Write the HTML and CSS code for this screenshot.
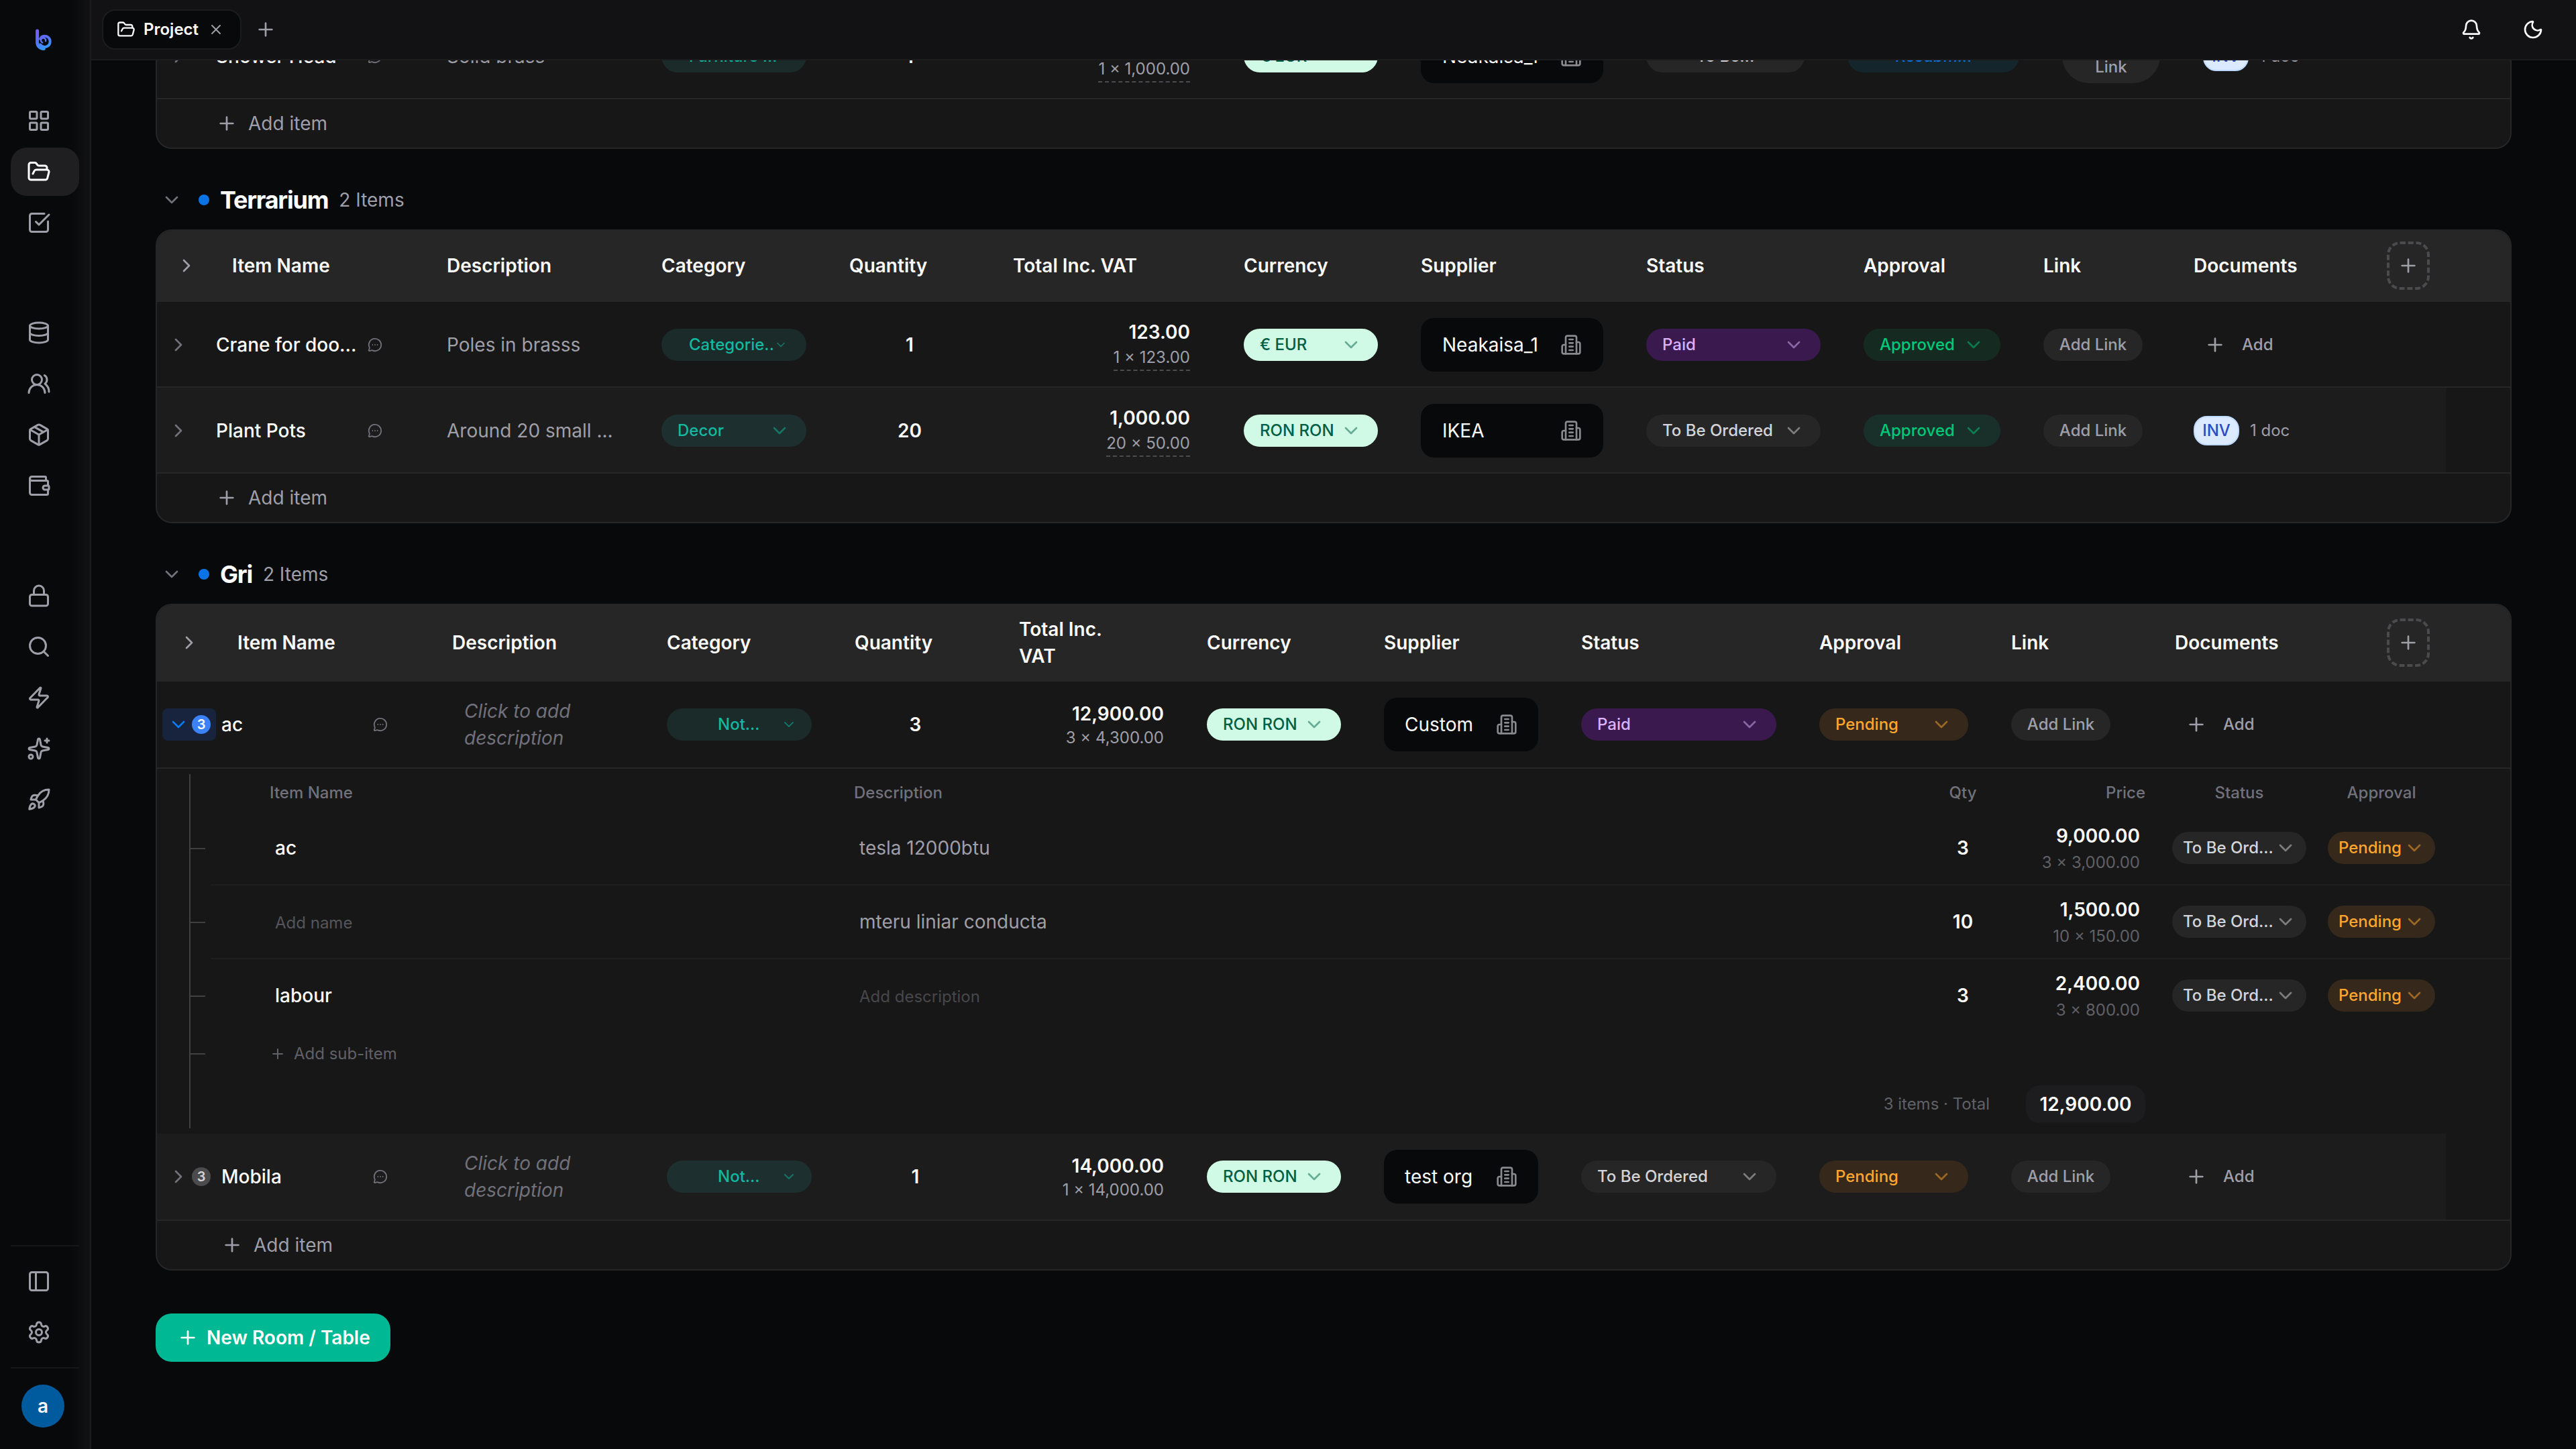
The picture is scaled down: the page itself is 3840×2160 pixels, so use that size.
FILE: index.html
```html
<!DOCTYPE html>
<html lang="en">
<head>
  <meta charset="UTF-8" />
  <meta name="viewport" content="width=device-width, initial-scale=1.0"/>
  <title>Project</title>
  <link rel="stylesheet" href="styles.css">
</head>
<body>

  <!-- icon sprite -->
  <svg class="sprite" aria-hidden="true">
    <symbol id="grid" viewBox="0 0 24 24"><rect x="3" y="3" width="7" height="7" rx="1"/><rect x="14" y="3" width="7" height="7" rx="1"/><rect x="14" y="14" width="7" height="7" rx="1"/><rect x="3" y="14" width="7" height="7" rx="1"/></symbol>
    <symbol id="folder" viewBox="0 0 24 24"><path d="m6 14 1.5-2.9A2 2 0 0 1 9.24 10H20a2 2 0 0 1 1.94 2.5l-1.54 6a2 2 0 0 1-1.95 1.5H4a2 2 0 0 1-2-2V5a2 2 0 0 1 2-2h3.9a2 2 0 0 1 1.69.9l.81 1.2a2 2 0 0 0 1.67.9H18a2 2 0 0 1 2 2v2"/></symbol>
    <symbol id="check" viewBox="0 0 24 24"><path d="M21 10.656V19a2 2 0 0 1-2 2H5a2 2 0 0 1-2-2V5a2 2 0 0 1 2-2h12.344"/><path d="m9 11 3 3L22 4"/></symbol>
    <symbol id="database" viewBox="0 0 24 24"><ellipse cx="12" cy="5" rx="9" ry="3"/><path d="M3 5v14a9 3 0 0 0 18 0V5"/><path d="M3 12a9 3 0 0 0 18 0"/></symbol>
    <symbol id="users" viewBox="0 0 24 24"><path d="M18 21a8 8 0 0 0-16 0"/><circle cx="10" cy="8" r="5"/><path d="M22 20c0-3.37-2-6.5-4-8a5 5 0 0 0-.45-8.3"/></symbol>
    <symbol id="package" viewBox="0 0 24 24"><path d="M11 21.73a2 2 0 0 0 2 0l7-4A2 2 0 0 0 21 16V8a2 2 0 0 0-1-1.73l-7-4a2 2 0 0 0-2 0l-7 4A2 2 0 0 0 3 8v8a2 2 0 0 0 1 1.73z"/><path d="M12 22V12"/><path d="M3.29 7 12 12l8.71-5"/><path d="m7.5 4.27 9 5.15"/></symbol>
    <symbol id="wallet" viewBox="0 0 24 24"><path d="M19 7V4a1 1 0 0 0-1-1H5a2 2 0 0 0 0 4h15a1 1 0 0 1 1 1v4h-3a2 2 0 0 0 0 4h3a1 1 0 0 0 1-1v-2a1 1 0 0 0-1-1"/><path d="M3 5v14a2 2 0 0 0 2 2h15a1 1 0 0 0 1-1v-4"/></symbol>
    <symbol id="lock" viewBox="0 0 24 24"><rect x="3" y="11" width="18" height="11" rx="2"/><path d="M7 11V7a5 5 0 0 1 10 0v4"/></symbol>
    <symbol id="search" viewBox="0 0 24 24"><circle cx="11" cy="11" r="8"/><path d="m21 21-4.34-4.34"/></symbol>
    <symbol id="zap" viewBox="0 0 24 24"><path d="M4 14a1 1 0 0 1-.78-1.63l9.9-10.2a.5.5 0 0 1 .86.46l-1.92 6.02A1 1 0 0 0 13 10h7a1 1 0 0 1 .78 1.63l-9.9 10.2a.5.5 0 0 1-.86-.46l1.92-6.02A1 1 0 0 0 11 14z"/></symbol>
    <symbol id="sparkles" viewBox="0 0 24 24"><path d="M11.017 2.814a1 1 0 0 1 1.966 0l1.051 5.558a2 2 0 0 0 1.594 1.594l5.558 1.051a1 1 0 0 1 0 1.966l-5.558 1.051a2 2 0 0 0-1.594 1.594l-1.051 5.558a1 1 0 0 1-1.966 0l-1.051-5.558a2 2 0 0 0-1.594-1.594l-5.558-1.051a1 1 0 0 1 0-1.966l5.558-1.051a2 2 0 0 0 1.594-1.594z"/><path d="M20 2v4"/><path d="M22 4h-4"/><circle cx="4" cy="20" r="2"/></symbol>
    <symbol id="rocket" viewBox="0 0 24 24"><path d="M4.5 16.5c-1.5 1.26-2 5-2 5s3.74-.5 5-2c.71-.84.7-2.13-.09-2.91a2.18 2.18 0 0 0-2.91-.09z"/><path d="m12 15-3-3a22 22 0 0 1 2-3.95A12.88 12.88 0 0 1 22 2c0 2.72-.78 7.5-6 11a22.35 22.35 0 0 1-4 2z"/><path d="M9 12H4s.55-3.03 2-4c1.62-1.08 5 0 5 0"/><path d="M12 15v5s3.03-.55 4-2c1.08-1.62 0-5 0-5"/></symbol>
    <symbol id="panel" viewBox="0 0 24 24"><rect x="3" y="3" width="18" height="18" rx="2"/><path d="M9 3v18"/></symbol>
    <symbol id="settings" viewBox="0 0 24 24"><path d="M9.671 4.136a2.34 2.34 0 0 1 4.659 0 2.34 2.34 0 0 0 3.319 1.915 2.34 2.34 0 0 1 2.33 4.033 2.34 2.34 0 0 0 0 3.831 2.34 2.34 0 0 1-2.33 4.033 2.34 2.34 0 0 0-3.319 1.915 2.34 2.34 0 0 1-4.659 0 2.34 2.34 0 0 0-3.32-1.915 2.34 2.34 0 0 1-2.33-4.033 2.34 2.34 0 0 0 0-3.831A2.34 2.34 0 0 1 6.35 6.051a2.34 2.34 0 0 0 3.319-1.915"/><circle cx="12" cy="12" r="3"/></symbol>
    <symbol id="bell" viewBox="0 0 24 24"><path d="M10.268 21a2 2 0 0 0 3.464 0"/><path d="M3.262 15.326A1 1 0 0 0 4 17h16a1 1 0 0 0 .74-1.673C19.41 13.956 18 12.499 18 8A6 6 0 0 0 6 8c0 4.499-1.411 5.956-2.738 7.326"/></symbol>
    <symbol id="moon" viewBox="0 0 24 24"><path d="M20.985 12.486a9 9 0 1 1-9.473-9.472c.405-.022.617.46.402.803a6 6 0 0 0 8.268 8.268c.344-.215.825-.004.803.401"/></symbol>
    <symbol id="plus" viewBox="0 0 24 24"><path d="M5 12h14"/><path d="M12 5v14"/></symbol>
    <symbol id="x" viewBox="0 0 24 24"><path d="M18 6 6 18"/><path d="m6 6 12 12"/></symbol>
    <symbol id="down" viewBox="0 0 24 24"><path d="m6 9 6 6 6-6"/></symbol>
    <symbol id="right" viewBox="0 0 24 24"><path d="m9 18 6-6-6-6"/></symbol>
    <symbol id="comment" viewBox="0 0 24 24"><path d="M2.992 16.342a2 2 0 0 1 .094 1.167l-1.065 3.29a1 1 0 0 0 1.236 1.168l3.413-.998a2 2 0 0 1 1.099.092 10 10 0 1 0-4.777-4.719"/><path d="M8 12h.01"/><path d="M12 12h.01"/><path d="M16 12h.01"/></symbol>
    <symbol id="building" viewBox="0 0 24 24"><path d="M6 22V4a2 2 0 0 1 2-2h8a2 2 0 0 1 2 2v18Z"/><path d="M6 12H4a2 2 0 0 0-2 2v6a2 2 0 0 0 2 2h2"/><path d="M18 9h2a2 2 0 0 1 2 2v9a2 2 0 0 1-2 2h-2"/><path d="M10 6h4"/><path d="M10 10h4"/><path d="M10 14h4"/><path d="M10 18h4"/></symbol>
  </svg>

  <aside class="sidebar">
    <svg class="logo" viewBox="0 0 26 34">
      <defs>
        <linearGradient id="logoFill" gradientUnits="userSpaceOnUse" x1="4" y1="2" x2="18" y2="32">
          <stop offset="0" stop-color="#7c5cf5"/>
          <stop offset="0.45" stop-color="#5b6cf8"/>
          <stop offset="1" stop-color="#2ea0f8"/>
        </linearGradient>
      </defs>
      <g fill="none" stroke="url(#logoFill)" stroke-linecap="round" stroke-linejoin="round">
        <path d="M3.600 4V21a9.400 9.400 0 0 0 9.600 9.600" stroke-width="5"/>
        <path d="M8 24.500a8 8 0 0 0 14.600 -4.500a7.800 7.800 0 0 0 -8.600 -8.300a7 7 0 0 0 -6 4.300" stroke-width="4"/>
        <path d="M11.200 21.500a3.600 3.600 0 1 1 4.800 -2.300" stroke-width="2.400"/>
      </g>
    </svg>

    <nav class="nav">
      <div class="nav-group">
        <a class="nav-item"><svg class="icon"><use href="#grid"/></svg></a>
        <a class="nav-item active"><svg class="icon"><use href="#folder"/></svg></a>
        <a class="nav-item"><svg class="icon"><use href="#check"/></svg></a>
      </div>
      <div class="nav-group">
        <a class="nav-item"><svg class="icon"><use href="#database"/></svg></a>
        <a class="nav-item"><svg class="icon"><use href="#users"/></svg></a>
        <a class="nav-item"><svg class="icon"><use href="#package"/></svg></a>
        <a class="nav-item"><svg class="icon"><use href="#wallet"/></svg></a>
      </div>
      <div class="nav-group">
        <a class="nav-item"><svg class="icon"><use href="#lock"/></svg></a>
        <a class="nav-item"><svg class="icon"><use href="#search"/></svg></a>
        <a class="nav-item"><svg class="icon"><use href="#zap"/></svg></a>
        <a class="nav-item"><svg class="icon"><use href="#sparkles"/></svg></a>
        <a class="nav-item"><svg class="icon"><use href="#rocket"/></svg></a>
      </div>
    </nav>

    <div class="side-bottom">
      <a class="nav-item"><svg class="icon"><use href="#panel"/></svg></a>
      <a class="nav-item"><svg class="icon"><use href="#settings"/></svg></a>
    </div>
    <div class="side-user"><div class="avatar">a</div></div>
  </aside>

  <div class="page">
    <header class="topbar">
      <div class="tab">
        <svg class="icon tab-folder"><use href="#folder"/></svg>
        <span>Project</span>
        <svg class="icon tab-close"><use href="#x"/></svg>
      </div>
      <svg class="icon tab-add"><use href="#plus"/></svg>
      <div class="top-actions">
        <svg class="icon"><use href="#bell"/></svg>
        <svg class="icon"><use href="#moon"/></svg>
      </div>
    </header>

    <main class="content">

      <!-- room scrolled under the top bar -->
      <section class="card cut t1">
        <div class="row">
          <div class="name-cell">
            <svg class="icon chev"><use href="#right"/></svg>
            <span class="name">Shower Head</span>
            <svg class="icon comment"><use href="#comment"/></svg>
          </div>
          <div class="desc">Solid brass</div>
          <div><span class="pill teal tight">Furniture ...<svg class="icon"><use href="#down"/></svg></span></div>
          <div class="qty">1</div>
          <div class="total"><b>1,000.00</b><small class="dash">1 × 1,000.00</small></div>
          <div><span class="pill mint">€ EUR<svg class="icon"><use href="#down"/></svg></span></div>
          <div><span class="supplier">Neakaisa_1<svg class="icon"><use href="#building"/></svg></span></div>
          <div><span class="pill gray mid">To Be...</span></div>
          <div><span class="pill blue mid">Resubm...</span></div>
          <div><span class="pill link two">Add<br>Link</span></div>
          <div class="docs"><span class="inv">INV</span>1 doc</div>
        </div>
        <div class="add-item"><svg class="icon"><use href="#plus"/></svg>Add item</div>
      </section>

      <div class="room-head">
        <svg class="icon"><use href="#down"/></svg>
        <i class="dot"></i>
        <h2>Terrarium</h2>
        <span>2 Items</span>
      </div>
      <section class="card t2">
        <div class="row head">
          <div class="name-cell"><svg class="icon chev"><use href="#right"/></svg>Item Name</div>
          <div>Description</div>
          <div>Category</div>
          <div>Quantity</div>
          <div>Total Inc. VAT</div>
          <div>Currency</div>
          <div>Supplier</div>
          <div>Status</div>
          <div>Approval</div>
          <div>Link</div>
          <div>Documents</div>
          <div><span class="add-col"><svg class="icon"><use href="#plus"/></svg></span></div>
        </div>
        <div class="row">
          <div class="name-cell">
            <svg class="icon chev"><use href="#right"/></svg>
            <span class="name">Crane for doo...</span>
            <svg class="icon comment"><use href="#comment"/></svg>
          </div>
          <div class="desc">Poles in brasss</div>
          <div><span class="pill teal tight">Categorie..<svg class="icon"><use href="#down"/></svg></span></div>
          <div class="qty">1</div>
          <div class="total"><b>123.00</b><small class="dash">1 × 123.00</small></div>
          <div><span class="pill mint">€ EUR<svg class="icon"><use href="#down"/></svg></span></div>
          <div><span class="supplier">Neakaisa_1<svg class="icon"><use href="#building"/></svg></span></div>
          <div><span class="pill purple">Paid<svg class="icon"><use href="#down"/></svg></span></div>
          <div><span class="pill green">Approved<svg class="icon"><use href="#down"/></svg></span></div>
          <div><span class="pill link">Add Link</span></div>
          <div class="add-doc"><svg class="icon"><use href="#plus"/></svg>Add</div>
          <div></div>
        </div>
        <div class="row alt">
          <div class="name-cell">
            <svg class="icon chev"><use href="#right"/></svg>
            <span class="name">Plant Pots</span>
            <svg class="icon comment"><use href="#comment"/></svg>
          </div>
          <div class="desc">Around 20 small ...</div>
          <div><span class="pill teal">Decor<svg class="icon"><use href="#down"/></svg></span></div>
          <div class="qty">20</div>
          <div class="total"><b>1,000.00</b><small class="dash">20 × 50.00</small></div>
          <div><span class="pill mint">RON RON<svg class="icon"><use href="#down"/></svg></span></div>
          <div><span class="supplier">IKEA<svg class="icon"><use href="#building"/></svg></span></div>
          <div><span class="pill gray">To Be Ordered<svg class="icon"><use href="#down"/></svg></span></div>
          <div><span class="pill green">Approved<svg class="icon"><use href="#down"/></svg></span></div>
          <div><span class="pill link">Add Link</span></div>
          <div class="docs"><span class="inv">INV</span>1 doc</div>
          <div></div>
        </div>
        <div class="add-item"><svg class="icon"><use href="#plus"/></svg>Add item</div>
      </section>

      <div class="room-head">
        <svg class="icon"><use href="#down"/></svg>
        <i class="dot"></i>
        <h2>Gri</h2>
        <span>2 Items</span>
      </div>
      <section class="card t3">
        <div class="row head">
          <div class="name-cell"><svg class="icon chev"><use href="#right"/></svg>Item Name</div>
          <div>Description</div>
          <div>Category</div>
          <div>Quantity</div>
          <div>Total Inc.<br>VAT</div>
          <div>Currency</div>
          <div>Supplier</div>
          <div>Status</div>
          <div>Approval</div>
          <div>Link</div>
          <div>Documents</div>
          <div><span class="add-col"><svg class="icon"><use href="#plus"/></svg></span></div>
        </div>
        <div class="row">
          <div class="name-cell">
            <span class="toggle open"><svg class="icon"><use href="#down"/></svg><i>3</i></span>
            <span class="name">ac</span>
            <svg class="icon comment"><use href="#comment"/></svg>
          </div>
          <div class="desc empty">Click to add<br>description</div>
          <div><span class="pill teal not">Not...<svg class="icon"><use href="#down"/></svg></span></div>
          <div class="qty">3</div>
          <div class="total"><b>12,900.00</b><small>3 × 4,300.00</small></div>
          <div><span class="pill mint">RON RON<svg class="icon"><use href="#down"/></svg></span></div>
          <div><span class="supplier">Custom<svg class="icon"><use href="#building"/></svg></span></div>
          <div><span class="pill purple">Paid<svg class="icon"><use href="#down"/></svg></span></div>
          <div><span class="pill amber">Pending<svg class="icon"><use href="#down"/></svg></span></div>
          <div><span class="pill link">Add Link</span></div>
          <div class="add-doc"><svg class="icon"><use href="#plus"/></svg>Add</div>
          <div></div>
        </div>

        <div class="sub">
          <div class="sub-line sub-head">
            <div class="sub-row">
              <div>Item Name</div><div>Description</div><div>Qty</div><div>Price</div><div>Status</div><div>Approval</div>
            </div>
          </div>
          <div class="sub-line">
            <i class="tick"></i>
            <div class="sub-row">
              <div class="sub-name">ac</div>
              <div class="sub-desc">tesla 12000btu</div>
              <div class="sub-qty">3</div>
              <div class="sub-price"><b>9,000.00</b><small>3 × 3,000.00</small></div>
              <div><span class="pill gray">To Be Ord...<svg class="icon"><use href="#down"/></svg></span></div>
              <div><span class="pill amber">Pending<svg class="icon"><use href="#down"/></svg></span></div>
            </div>
          </div>
          <div class="sub-line">
            <i class="tick"></i>
            <div class="sub-row">
              <div class="sub-name blank">Add name</div>
              <div class="sub-desc">mteru liniar conducta</div>
              <div class="sub-qty">10</div>
              <div class="sub-price"><b>1,500.00</b><small>10 × 150.00</small></div>
              <div><span class="pill gray">To Be Ord...<svg class="icon"><use href="#down"/></svg></span></div>
              <div><span class="pill amber">Pending<svg class="icon"><use href="#down"/></svg></span></div>
            </div>
          </div>
          <div class="sub-line">
            <i class="tick"></i>
            <div class="sub-row last">
              <div class="sub-name">labour</div>
              <div class="sub-desc blank dim">Add description</div>
              <div class="sub-qty">3</div>
              <div class="sub-price"><b>2,400.00</b><small>3 × 800.00</small></div>
              <div><span class="pill gray">To Be Ord...<svg class="icon"><use href="#down"/></svg></span></div>
              <div><span class="pill amber">Pending<svg class="icon"><use href="#down"/></svg></span></div>
            </div>
          </div>
          <div class="sub-line sub-add">
            <i class="tick"></i>
            <svg class="icon"><use href="#plus"/></svg>Add sub-item
          </div>
          <div class="sub-total"><span>3 items · Total</span><b>12,900.00</b></div>
        </div>

        <div class="row alt">
          <div class="name-cell">
            <span class="toggle"><svg class="icon"><use href="#right"/></svg><i>3</i></span>
            <span class="name">Mobila</span>
            <svg class="icon comment"><use href="#comment"/></svg>
          </div>
          <div class="desc empty">Click to add<br>description</div>
          <div><span class="pill teal not">Not...<svg class="icon"><use href="#down"/></svg></span></div>
          <div class="qty">1</div>
          <div class="total"><b>14,000.00</b><small>1 × 14,000.00</small></div>
          <div><span class="pill mint">RON RON<svg class="icon"><use href="#down"/></svg></span></div>
          <div><span class="supplier">test org<svg class="icon"><use href="#building"/></svg></span></div>
          <div><span class="pill gray">To Be Ordered<svg class="icon"><use href="#down"/></svg></span></div>
          <div><span class="pill amber">Pending<svg class="icon"><use href="#down"/></svg></span></div>
          <div><span class="pill link">Add Link</span></div>
          <div class="add-doc"><svg class="icon"><use href="#plus"/></svg>Add</div>
          <div></div>
        </div>
        <div class="add-item"><svg class="icon"><use href="#plus"/></svg>Add item</div>
      </section>

      <button class="new-room"><svg class="icon"><use href="#plus"/></svg>New Room / Table</button>
    </main>
  </div>

</body>
</html>
```

FILE: styles.css
```css
* {
  box-sizing: border-box;
  margin: 0;
  padding: 0;
}

body {
  display: flex;
  width: 3840px;
  height: 2160px;
  overflow: hidden;
  background: #08090b;
  color: #fafafa;
  font-family: Inter, "Liberation Sans", sans-serif;
  font-size: 28px;
  line-height: 40px;
}

.sprite {
  position: absolute;
  width: 0;
  height: 0;
}

.icon {
  width: 32px;
  height: 32px;
  flex-shrink: 0;
  fill: none;
  stroke: currentColor;
  stroke-width: 2;
  stroke-linecap: round;
  stroke-linejoin: round;
}

/* sidebar */
.sidebar {
  display: flex;
  flex-direction: column;
  width: 136px;
  height: 2160px;
  padding: 0 16px;
  flex-shrink: 0;
  border-right: 2px solid #1c1c1e;
  background: linear-gradient(to right, #08090b 106px, #121214 134px);
}

.logo {
  width: 26px;
  height: 34px;
  margin: 42px 0 68px 36px;
  flex-shrink: 0;
}

.nav {
  display: flex;
  flex-direction: column;
  gap: 92px;
  flex: 1;
}

.nav-group {
  display: flex;
  flex-direction: column;
  gap: 4px;
}

.nav-item {
  display: flex;
  align-items: center;
  width: 102px;
  height: 72px;
  padding-left: 24px;
  border-radius: 24px;
  color: #9f9fa9;
}

.nav-item .icon {
  width: 36px;
  height: 36px;
}

.nav-item.active {
  background: #1f1f21;
  color: #fff;
}

.side-bottom {
  display: flex;
  flex-direction: column;
  gap: 4px;
  width: 102px;
  padding: 16px 0;
  border-top: 2px solid #161618;
}

.side-user {
  width: 102px;
  height: 122px;
  padding: 24px 0 0 16px;
  border-top: 2px solid #161618;
}

.avatar {
  width: 64px;
  height: 64px;
  border-radius: 50%;
  background: #005a9e;
  font-weight: 600;
  line-height: 64px;
  text-align: center;
}

/* top bar */
.page {
  display: flex;
  flex-direction: column;
  flex: 1;
  min-width: 0;
}

.topbar {
  display: flex;
  align-items: center;
  height: 90px;
  padding: 0 48px 0 16px;
  flex-shrink: 0;
  border-bottom: 2px solid #1c1c1e;
  background: #121214;
}

.tab {
  display: flex;
  align-items: center;
  width: 208px;
  height: 60px;
  padding-left: 20px;
  border: 2px solid #1c1c1e;
  border-radius: 20px;
  background: #08090b;
  font-size: 24px;
  font-weight: 600;
}

.tab-folder {
  width: 28px;
  height: 28px;
  margin-right: 12px;
}

.tab-close {
  width: 24px;
  height: 24px;
  margin-left: 14px;
  color: #9f9fa9;
}

.tab-add {
  margin-left: 20px;
  color: #9f9fa9;
}

.top-actions {
  display: flex;
  gap: 60px;
  margin-left: auto;
}

/* content */
.content {
  flex: 1;
  padding: 0 96px;
  overflow: hidden;
}

.card {
  border: 2px solid #262626;
  border-radius: 24px;
  background: #171717;
  overflow: hidden;
}

.card.cut {
  margin-top: -72px;
}

.room-head {
  display: flex;
  align-items: center;
  height: 56px;
  margin: 48px 0 16px;
  padding-left: 8px;
  color: #9f9fa9;
}

.room-head .icon {
  margin-right: 24px;
  color: #71717b;
}

.room-head .dot {
  width: 16px;
  height: 16px;
  margin-right: 16px;
  border-radius: 50%;
  background: #0a74e6;
}

.room-head h2 {
  margin-right: 16px;
  color: #fff;
  font-size: 36px;
  font-weight: 650;
  letter-spacing: -0.035em;
}

/* rows share one grid per table */
.row {
  display: grid;
  align-items: center;
  height: 128px;
  padding-top: 2px;
  border-bottom: 2px solid #262626;
}

.row > div {
  padding-right: 32px;
}

.t1 .row {
  grid-template-columns: 400px 320px 280px 244px 344px 264px 336px 300px 320px 210px 1fr;
}

.t2 .row {
  grid-template-columns: 400px 320px 280px 244px 344px 264px 336px 324px 268px 224px 288px 1fr;
}

.t3 .row {
  grid-template-columns: 408px 320px 280px 245px 280px 264px 294px 355px 286px 244px 316px 1fr;
  height: 130px;
  padding-top: 0;
}

.row > div:not(:first-child) {
  padding-left: 32px;
}

.row.head {
  height: 106px;
  padding-top: 0;
  background: #262626;
  font-weight: 600;
}

.t3 .row.head {
  height: 114px;
}

.row.alt {
  background: linear-gradient(#1c1c1c, #1c1c1c) 0 0 / 3412px 100% no-repeat;
}

.name-cell {
  display: flex;
  align-items: center;
  padding-left: 16px;
}

.row > .name-cell {
  padding-right: 0;
}

.name-cell .chev {
  margin-right: 40px;
  color: #71717b;
}

.head .name-cell .chev {
  margin: 0 52px 0 12px;
  color: #9f9fa9;
}

.t3 .head .name-cell .chev {
  margin: 0 56px 0 16px;
}

.name {
  width: 226px;
  font-weight: 500;
  white-space: nowrap;
}

.comment {
  width: 22px;
  height: 22px;
  color: #71717b;
}

.toggle {
  display: flex;
  align-items: center;
  gap: 4px;
  width: 80px;
  height: 48px;
  margin: 0 8px 0 -8px;
  padding-left: 8px;
  border-radius: 8px;
  color: #71717b;
}

.toggle i {
  width: 28px;
  height: 28px;
  border-radius: 50%;
  background: #4b4b4e;
  color: #d4d4d8;
  font-size: 20px;
  font-style: normal;
  font-weight: 600;
  line-height: 28px;
  text-align: center;
}

.toggle.open {
  background: #18233d;
  color: #0a7aee;
}

.toggle.open i {
  background: #3b82f6;
  color: #fff;
}

.desc {
  color: #9f9fa9;
  white-space: nowrap;
}

.row > .desc.empty {
  padding-left: 50px;
  color: #71717b;
  font-style: italic;
}

.qty {
  font-weight: 600;
  text-align: center;
}

.total {
  display: flex;
  flex-direction: column;
  align-items: flex-end;
  white-space: nowrap;
}

.total b {
  font-weight: 600;
}

.total small {
  color: #9f9fa9;
  font-size: 24px;
  line-height: 32px;
}

.t1 .row > .total,
.t2 .row > .total {
  padding-right: 48px;
}

.total .dash {
  padding: 2px 0;
  border-bottom: 2px dashed #4b4b50;
}

/* pills */
.pill {
  display: flex;
  align-items: center;
  justify-content: space-between;
  height: 48px;
  padding: 0 24px;
  border-radius: 24px;
  font-size: 24px;
  font-weight: 500;
  line-height: 32px;
  white-space: nowrap;
}

.pill .icon {
  opacity: 0.5;
}

.teal {
  background: #1a2b29;
  color: #14b8a0;
}

.alt .teal {
  background: #1d2f2e;
}

.tight {
  padding: 0 36px 0 41px;
}

.tight .icon {
  width: 20px;
  height: 20px;
}

.not {
  padding: 0 22px 0 76px;
}

.not .icon {
  width: 24px;
  height: 24px;
}

.mint {
  background: #d0fae5;
  color: #006045;
}

.purple {
  background: #3a194f;
  color: #dab2ff;
}

.green {
  background: #152b22;
  color: #00c879;
}

.alt .green {
  background: #19302a;
}

.amber {
  background: #36291c;
  color: #ffa52e;
}

.gray {
  background: #262626;
  color: #d4d4d8;
}

.blue {
  background: #14252c;
  color: #0a78ea;
}

.link {
  width: 148px;
  background: #262626;
  color: #9f9fa9;
}

.mid,
.link {
  justify-content: center;
}

.two {
  width: auto;
  height: 80px;
  border-radius: 40px;
  text-align: center;
}

.supplier {
  display: flex;
  align-items: center;
  justify-content: space-between;
  height: 80px;
  padding: 0 32px;
  border-radius: 20px;
  background: #08090b;
}

.t3 .supplier {
  padding: 0 31px;
}

.supplier .icon {
  color: #8a8a8e;
}

.docs {
  display: flex;
  align-items: center;
  gap: 16px;
  color: #9f9fa9;
  font-size: 24px;
}

.inv {
  width: 68px;
  height: 44px;
  border: 2px solid #bedbff;
  border-radius: 20px;
  background: #dbeafe;
  color: #2c4bc4;
  font-weight: 500;
  line-height: 40px;
  text-align: center;
}

.add-doc {
  display: flex;
  align-items: center;
  gap: 24px;
  color: #9f9fa9;
  font-size: 24px;
  font-weight: 500;
}

.row > div.add-doc:not(:first-child) {
  padding-left: 48px;
}

.add-col {
  display: flex;
  align-items: center;
  justify-content: center;
  width: 64px;
  height: 72px;
  border: 4px dashed #4b4b4e;
  border-radius: 20px;
  color: #9f9fa9;
}

.add-item {
  display: flex;
  align-items: center;
  gap: 16px;
  height: 72px;
  padding-left: 88px;
  color: #9f9fa9;
}

.t3 .add-item {
  padding-left: 96px;
}

/* sub items */
.sub {
  height: 528px;
  margin: 8px 0 8px 48px;
  border-left: 2px solid #404040;
}

.sub-line {
  display: flex;
  align-items: center;
}

.tick {
  width: 22px;
  height: 2px;
  margin-right: 8px;
  background: #404040;
}

.sub-row {
  display: grid;
  grid-template-columns: 871px 1609px 88px 228px 200px 160px;
  align-items: center;
  flex: 1;
  height: 110px;
  padding-left: 88px;
  border-bottom: 2px solid #1e1e1f;
}

.sub-row > div:nth-child(5) {
  margin: 0 -40px 0 40px;
}

.sub-row > div:nth-child(6) {
  margin: 0 -72px 0 72px;
}

.sub-row.last {
  border-bottom-color: transparent;
}

.sub-head .sub-row {
  height: 56px;
  margin-left: 30px;
  border: 0;
  color: #71717b;
  font-size: 24px;
  font-weight: 500;
}

.sub-head .sub-row > div:nth-child(n + 3) {
  text-align: center;
}

.sub-head .sub-row > div:nth-child(4) {
  text-align: right;
}

.sub-name,
.sub-desc {
  padding-left: 8px;
}

.sub-name {
  font-weight: 500;
}

.sub-desc {
  color: #9f9fa9;
}

.blank {
  padding-top: 3px;
  color: #55555b;
  font-size: 24px;
  font-weight: 400;
}

.dim {
  color: #47474b;
}

.sub-qty {
  font-weight: 600;
  text-align: center;
}

.sub-price {
  display: flex;
  flex-direction: column;
  padding: 4px 8px 0 0;
  text-align: right;
}

.sub-price b {
  font-weight: 600;
}

.sub-price small {
  color: #606067;
  font-size: 24px;
}

.sub-row .pill {
  padding: 0 15px 0 16px;
}

.sub-add {
  height: 62px;
  color: #606067;
  font-size: 24px;
}

.sub-add .icon {
  width: 24px;
  height: 24px;
  margin: 0 12px 0 88px;
}

.sub-total {
  display: flex;
  align-items: center;
  justify-content: flex-end;
  gap: 54px;
  height: 88px;
  padding-right: 544px;
  color: #606067;
  font-size: 24px;
}

.sub-total b {
  width: 178px;
  height: 56px;
  border-radius: 20px;
  background: #1d1d1f;
  color: #fff;
  font-size: 28px;
  font-weight: 600;
  line-height: 56px;
  text-align: center;
}

.new-room {
  display: flex;
  align-items: center;
  gap: 12px;
  width: 350px;
  height: 72px;
  margin-top: 64px;
  padding-left: 32px;
  border: 0;
  border-radius: 24px;
  background: #00b894;
  color: #fff;
  font: 600 28px/40px Inter, "Liberation Sans", sans-serif;
  white-space: nowrap;
}
```
